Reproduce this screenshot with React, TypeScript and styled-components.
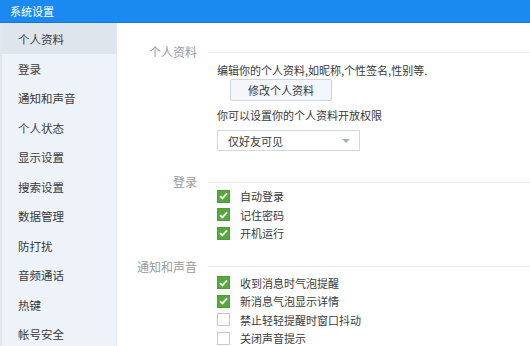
import styled, { createGlobalStyle } from "styled-components";

const GlobalStyle = createGlobalStyle`
  html, body {
    margin: 0;
    padding: 0;
    background: #ffffff;
  }
  body {
    font-family: "Noto Sans CJK SC", "Noto Sans", sans-serif;
    color: #3a3a3a;
  }
`;

const Window = styled.div`
  width: 530px;
  height: 346px;
  display: flex;
  flex-direction: column;
  overflow: hidden;
  background: #ffffff;
`;

const TitleBar = styled.div`
  height: 23px;
  flex-shrink: 0;
  display: flex;
  align-items: center;
  padding-left: 10px;
  background: #1b8af0;
  border-bottom: 1px solid #1673cf;
  box-sizing: border-box;
  color: #ffffff;
  font-size: 11px;
`;

const Body = styled.div`
  flex: 1;
  display: flex;
  min-height: 0;
`;

const Sidebar = styled.ul`
  width: 117px;
  flex-shrink: 0;
  margin: 0;
  padding: 0;
  list-style: none;
  background: #eef3f9;
  border-left: 2px solid #e2e7ed;
  border-right: 1px solid #e4e9ef;
  box-sizing: border-box;
`;

const NavItem = styled.li<{ $active?: boolean }>`
  height: 29.5px;
  display: flex;
  align-items: center;
  padding-left: 16px;
  font-size: 11.5px;
  color: #3a3a3a;
  background: ${(p) => (p.$active ? "#dfe5ec" : "transparent")};
  &:first-child {
    height: 31px;
  }
`;

const Content = styled.div`
  flex: 1;
  padding-top: 23px;
`;

const Section = styled.section<{ $gap?: number }>`
  margin-top: ${(p) => p.$gap ?? 0}px;
`;

const SectionHead = styled.div`
  display: flex;
  align-items: center;
  height: 12px;
`;

const SectionLabel = styled.div`
  width: 80px;
  text-align: right;
  font-size: 12px;
  line-height: 12px;
  color: #9a9a9a;
`;

const Rule = styled.div`
  flex: 1;
  height: 1px;
  margin-left: 11px;
  background: #eaedf1;
`;

const SectionBody = styled.div<{ $top?: number }>`
  padding-left: 100px;
  margin-top: ${(p) => p.$top ?? 0}px;
  display: flex;
  flex-direction: column;
  align-items: flex-start;
`;

const Text = styled.div<{ $top?: number }>`
  font-size: 11px;
  line-height: 16px;
  margin-top: ${(p) => p.$top ?? 0}px;
  color: #3a3a3a;
`;

const Button = styled.button`
  margin: 1px 0 0 13px;
  width: 102px;
  height: 22px;
  padding: 0;
  font-family: inherit;
  font-size: 11px;
  color: #3a3a3a;
  background: #f3f6fa;
  border: 1px solid #cfd5dc;
  border-radius: 2px;
`;

const Select = styled.div`
  margin-top: 7px;
  width: 143px;
  height: 21px;
  box-sizing: border-box;
  border: 1px solid #d3d8de;
  display: flex;
  align-items: center;
  justify-content: space-between;
  padding: 0 9px 0 10px;
  font-size: 11px;
  color: #3a3a3a;
  background: #ffffff;
`;

const Arrow = styled.span`
  width: 0;
  height: 0;
  border-left: 4px solid transparent;
  border-right: 4px solid transparent;
  border-top: 4px solid #a9afb6;
`;

const CheckRow = styled.label`
  height: 18.5px;
  display: flex;
  align-items: center;
  gap: 10px;
  font-size: 11px;
  color: #3a3a3a;
`;

const Box = styled.span<{ $checked?: boolean }>`
  width: 13px;
  height: 13px;
  box-sizing: border-box;
  display: flex;
  align-items: center;
  justify-content: center;
  background: ${(p) => (p.$checked ? "#55a83b" : "#ffffff")};
  border: 1px solid ${(p) => (p.$checked ? "#4d9d35" : "#c4c9cf")};
`;

const navItems = [
  "个人资料",
  "登录",
  "通知和声音",
  "个人状态",
  "显示设置",
  "搜索设置",
  "数据管理",
  "防打扰",
  "音频通话",
  "热键",
  "帐号安全",
];

const loginOptions = [
  { label: "自动登录", checked: true },
  { label: "记住密码", checked: true },
  { label: "开机运行", checked: true },
];

const noticeOptions = [
  { label: "收到消息时气泡提醒", checked: true },
  { label: "新消息气泡显示详情", checked: true },
  { label: "禁止轻轻提醒时窗口抖动", checked: false },
  { label: "关闭声音提示", checked: false },
];

function Check({ label, checked }: { label: string; checked: boolean }) {
  return (
    <CheckRow>
      <Box $checked={checked}>
        {checked && (
          <svg width="9" height="8" viewBox="0 0 9 8">
            <path d="M1 4.2 L3.4 6.4 L8 1.4" fill="none" stroke="#ffffff" strokeWidth="1.8" />
          </svg>
        )}
      </Box>
      {label}
    </CheckRow>
  );
}

export default function App() {
  return (
    <Window>
      <GlobalStyle />
      <TitleBar>系统设置</TitleBar>
      <Body>
        <Sidebar>
          {navItems.map((item, i) => (
            <NavItem key={item} $active={i === 0}>
              {item}
            </NavItem>
          ))}
        </Sidebar>
        <Content>
          <Section>
            <SectionHead>
              <SectionLabel>个人资料</SectionLabel>
              <Rule />
            </SectionHead>
            <SectionBody $top={4}>
              <Text>编辑你的个人资料,如昵称,个性签名,性别等.</Text>
              <Button>修改个人资料</Button>
              <Text $top={6}>你可以设置你的个人资料开放权限</Text>
              <Select>
                仅好友可见
                <Arrow />
              </Select>
            </SectionBody>
          </Section>
          <Section $gap={25}>
            <SectionHead>
              <SectionLabel>登录</SectionLabel>
              <Rule />
            </SectionHead>
            <SectionBody $top={-1}>
              {loginOptions.map((o) => (
                <Check key={o.label} {...o} />
              ))}
            </SectionBody>
          </Section>
          <Section $gap={18}>
            <SectionHead>
              <SectionLabel>通知和声音</SectionLabel>
              <Rule />
            </SectionHead>
            <SectionBody $top={1}>
              {noticeOptions.map((o) => (
                <Check key={o.label} {...o} />
              ))}
            </SectionBody>
          </Section>
        </Content>
      </Body>
    </Window>
  );
}
